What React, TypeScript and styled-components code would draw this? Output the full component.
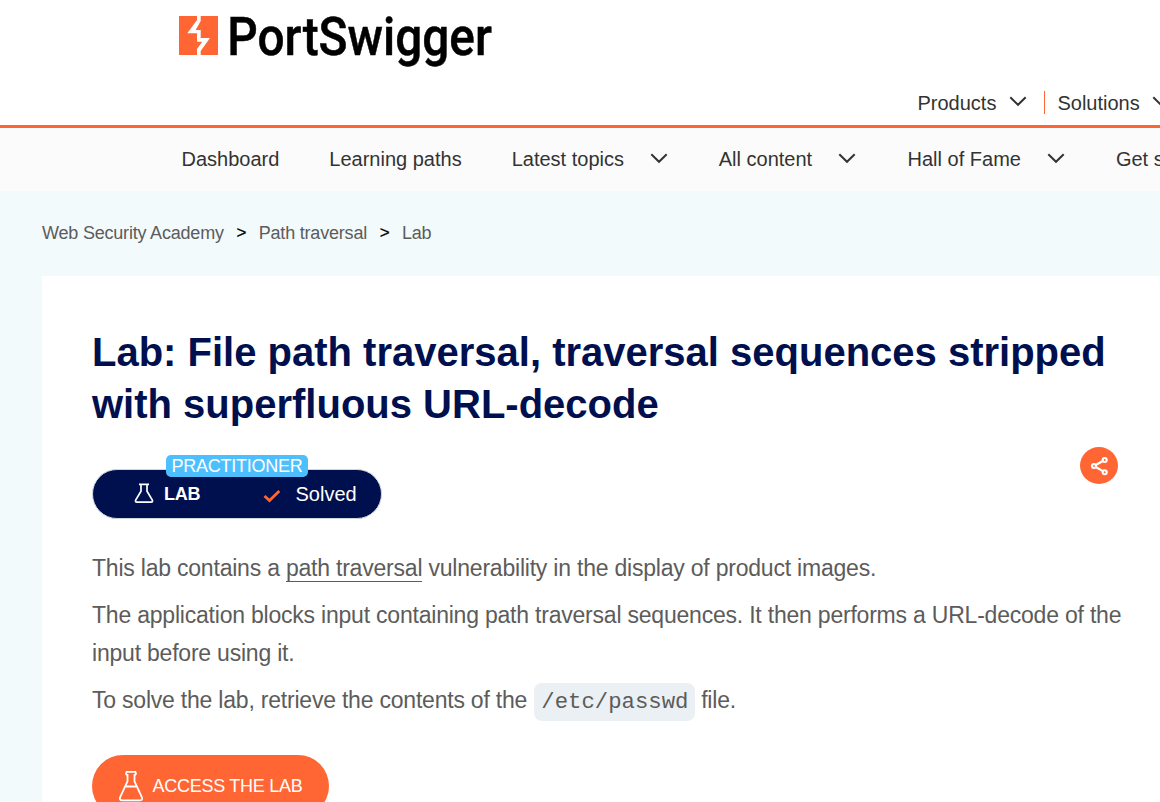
import React from "react";
import styled, { createGlobalStyle } from "styled-components";

const Global = createGlobalStyle`
  * { box-sizing: border-box; }
  html, body { margin: 0; height: 802px; overflow: hidden; background: #fff; }
  body { font-family: "Liberation Sans", Arial, sans-serif; color: #333332; }
  a { color: inherit; text-decoration: none; }
`;

const Page = styled.div`
  width: 1160px;
  height: 802px;
  overflow: hidden;
  display: flex;
  flex-direction: column;
`;

const Header = styled.header`
  height: 128px;
  flex: none;
  border-bottom: 3px solid #ff6633;
  padding-left: 179px;
  display: flex;
  flex-direction: column;
  justify-content: space-between;
`;

const Logo = styled.svg`
  display: block;
  width: 400px;
  height: 75px;
`;

const TopNav = styled.nav`
  display: flex;
  align-items: center;
  height: 24px;
  margin: 0 0 10px 738.5px;
  font-size: 20px;
  white-space: nowrap;
`;

const TopItem = styled.a`
  display: flex;
  align-items: center;
  flex: none;
`;

const Arrow = styled.svg<{ $left: number }>`
  flex: none;
  width: 18px;
  height: 12px;
  margin-left: ${(p) => p.$left}px;
  margin-top: -4px;
  fill: none;
  stroke: #333332;
  stroke-width: 2;
`;

const Divider = styled.span`
  flex: none;
  width: 1px;
  height: 23px;
  margin: -2px 12.5px 0 17px;
  background: #ff6633;
`;

const SubNav = styled.nav`
  flex: none;
  height: 63px;
  padding-left: 181.5px;
  background: #fbfbfb;
  display: flex;
  align-items: center;
  gap: 50px;
  font-size: 20px;
  white-space: nowrap;
`;

const SubItem = styled.a<{ $shift?: number }>`
  display: flex;
  align-items: center;
  flex: none;
  height: 23px;
  margin-left: ${(p) => p.$shift ?? 0}px;
`;

const Main = styled.main`
  flex: 1;
  background: #f2fafc;
  padding-left: 42px;
`;

const Crumbs = styled.div`
  height: 85px;
  padding-top: 32px;
  font-size: 18px;
  line-height: 21px;
  letter-spacing: -0.2px;
  color: #5c5c5b;
  display: flex;
`;

const Sep = styled.span`
  width: 35px;
  color: #000;
  text-align: center;
  font-size: 17px;
  line-height: 20px;
  -webkit-text-stroke: 0.3px #000;
`;

const Card = styled.article`
  background: #fff;
  height: 526px;
  padding: 50px 0 0 50px;
`;

const Title = styled.h1`
  margin: 0;
  font-size: 40px;
  line-height: 52px;
  color: #00104f;
  white-space: nowrap;
`;

const StatusRow = styled.div`
  display: flex;
  justify-content: space-between;
  height: 72px;
  margin-top: 17px;
  padding-right: 42px;
`;

const Status = styled.div`
  position: relative;
  width: 290px;
  height: 50px;
  margin-top: 22px;
  border: 1px solid #cfd8d8;
  border-radius: 25px;
  background: #00104f;
  color: #fff;
  display: flex;
  align-items: center;
`;

const Level = styled.span`
  position: absolute;
  left: 73px;
  top: -15px;
  width: 142px;
  height: 22px;
  border-radius: 5px;
  background: #4dbfff;
  font-size: 18px;
  line-height: 22px;
  letter-spacing: -0.26px;
  text-align: center;
`;

const LabFlask = styled.svg`
  width: 20px;
  height: 22px;
  margin: -3px 0 0 41px;
  fill: none;
  stroke: #fff;
  stroke-width: 1.7;
`;

const LabLabel = styled.b`
  font-size: 18px;
  letter-spacing: -0.2px;
  width: 99px;
  margin-left: 10px;
`;

const Tick = styled.svg`
  width: 18px;
  height: 14px;
  margin-top: 3px;
  fill: none;
  stroke: #ff6633;
  stroke-width: 2.8;
`;

const Solved = styled.span`
  font-size: 20px;
  margin-left: 14.5px;
`;

const Share = styled.button`
  width: 38px;
  height: 37px;
  padding: 0;
  border: 0;
  border-radius: 50%;
  background: #ff6633;
  svg { display: block; fill: none; stroke: #fff; stroke-width: 2.1; }
`;

const Text = styled.p<{ $top?: number }>`
  margin: ${(p) => p.$top ?? 9}px 0 0;
  font-size: 23px;
  line-height: 38px;
  letter-spacing: -0.213px;
  color: #5c5c5b;
  white-space: nowrap;
`;

const TextLink = styled.a`
  border-bottom: 1px solid #5c5c5b;
`;

const Code = styled.code`
  display: inline-block;
  height: 38px;
  padding: 0 6.5px 0 7.5px;
  margin: 2px 0 -2px 0.5px;
  border-radius: 8px;
  background: #eaf0f3;
  font-family: "Liberation Mono", monospace;
  font-size: 22.3px;
  letter-spacing: 0;
  vertical-align: top;
`;

const Access = styled.button`
  width: 237px;
  height: 62px;
  margin-top: 36px;
  padding: 0 0 0 26px;
  border: 0;
  border-radius: 31px;
  background: #ff6633;
  color: #fff;
  font: 18px "Liberation Sans", Arial, sans-serif;
  letter-spacing: -0.27px;
  white-space: nowrap;
  display: flex;
  align-items: center;
  svg { flex: none; margin-right: 8.5px; fill: none; stroke: #fff; stroke-width: 1.8; }
`;

function Chevron({ left }: { left: number }) {
  return (
    <Arrow $left={left} viewBox="0 0 18 12">
      <path d="M1.3 2.2 9 9.8l7.7-7.6" />
    </Arrow>
  );
}

const sections = [
  { name: "Dashboard" },
  { name: "Learning paths" },
  { name: "Latest topics", arrow: 26.5 },
  { name: "All content", arrow: 26, shift: 0.3 },
  { name: "Hall of Fame", arrow: 26, shift: 1.4 },
  { name: "Get started", shift: 1 },
];

export default function App() {
  return (
    <Page>
      <Global />
      <Header>
        <Logo viewBox="0 0 400 75" aria-label="PortSwigger">
          <path fill="#ff6633" d="M0 16h39v39H0z" />
          <path
            fill="#fff"
            d="M18 16h3.700v5L16.700 30h5v8H31L21.700 51v4H18v-6l5.300-7.300H18v-8.400H8.300L18 20z"
          />
          <text
            x="48.300"
            y="54.500"
            fontFamily="Roboto"
            fontWeight="500"
            fontSize="53.500"
            stroke="#000"
            strokeWidth="0.5"
            textLength="264.500"
            lengthAdjust="spacingAndGlyphs"
          >
            PortSwigger
          </text>
        </Logo>
        <TopNav>
          <TopItem>Products<Chevron left={12.5} /></TopItem>
          <Divider />
          <TopItem>Solutions<Chevron left={12.5} /></TopItem>
        </TopNav>
      </Header>
      <SubNav>
        {sections.map((s) => (
          <SubItem key={s.name} $shift={s.shift}>
            {s.name}
            {s.arrow && <Chevron left={s.arrow} />}
          </SubItem>
        ))}
      </SubNav>
      <Main>
        <Crumbs>
          <a>Web Security Academy</a>
          <Sep>&gt;</Sep>
          <a>Path traversal</a>
          <Sep>&gt;</Sep>
          <a>Lab</a>
        </Crumbs>
        <Card>
          <Title>
            Lab: File path traversal, traversal sequences stripped
            <br />
            with superfluous URL-decode
          </Title>
          <StatusRow>
            <Status>
              <Level>PRACTITIONER</Level>
              <LabFlask viewBox="0 0 20 22">
                <path d="M5 2.300h10M7 2.300v7L1.800 17.800Q.8 20.200 3 20.200h14q2.200 0 1.200-2.400L13 9.300v-7" />
              </LabFlask>
              <LabLabel>LAB</LabLabel>
              <Tick viewBox="0 0 18 14"><path d="m1.500 7 5 4.600L16.300 2" /></Tick>
              <Solved>Solved</Solved>
            </Status>
            <Share aria-label="Share">
              <svg width="38" height="37" viewBox="0 0 38 37">
                <circle cx="14" cy="19" r="2" />
                <circle cx="24.700" cy="13" r="2" />
                <circle cx="24.700" cy="25.300" r="2" />
                <path d="m15.800 18 7-4M15.800 20l7 4.200" />
              </svg>
            </Share>
          </StatusRow>
          <Text $top={30}>
            This lab contains a <TextLink>path traversal</TextLink> vulnerability in the display of product images.
          </Text>
          <Text>
            The application blocks input containing path traversal sequences. It then performs a URL-decode of the
            <br />
            input before using it.
          </Text>
          <Text>
            To solve the lab, retrieve the contents of the <Code>/etc/passwd</Code> file.
          </Text>
          <Access>
            <svg width="26" height="32" viewBox="0 0 26 32">
              <path d="M8.500 1.900h9q1 1.500-.3 3h-.7v6.500L23.800 27q1.200 3.300-2 3.300H4.200q-3.200 0-2-3.300L9.500 11.400V4.900h-.7q-1.300-1.500-.3-3zM7 16.500h12" />
            </svg>
            ACCESS THE LAB
          </Access>
        </Card>
      </Main>
    </Page>
  );
}
